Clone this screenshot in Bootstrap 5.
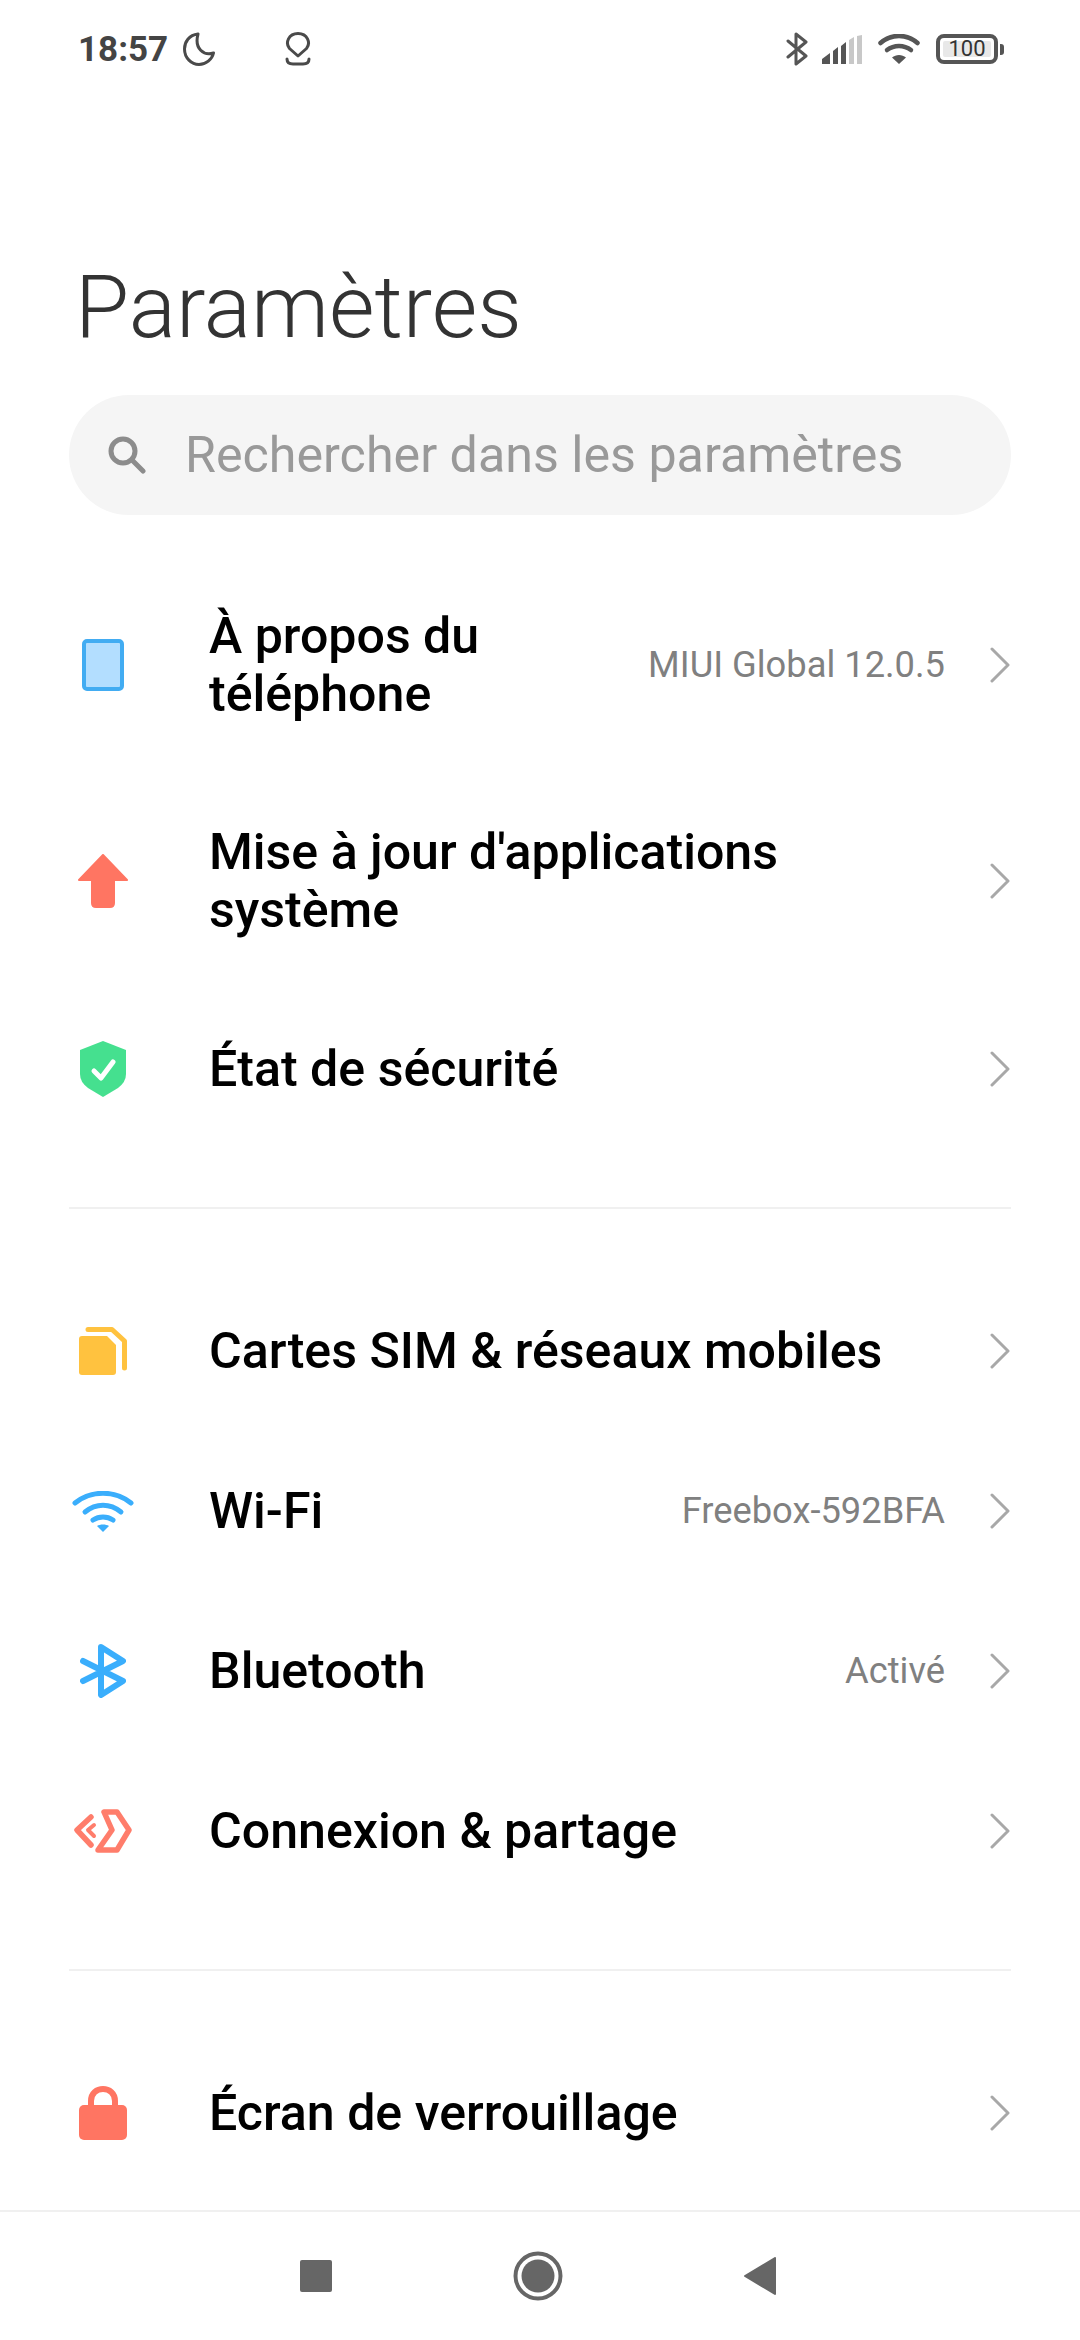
<!DOCTYPE html>
<html lang="fr">
<head>
    <meta charset="UTF-8">
    <meta name="viewport" content="width=device-width, initial-scale=1">
    <title>Paramètres</title>
    <link href="https://cdn.jsdelivr.net/npm/bootstrap@5.3.0/dist/css/bootstrap.min.css" rel="stylesheet">
    <style>
        html, body { height: 2340px; overflow: hidden; }
        body { font-family: Roboto, "Liberation Sans", sans-serif; background: #fff; color: #000; }
        .screen { height: 2340px; }
        .status-bar { height: 98px; padding: 0 76px 0 78px; color: #444; }
        .status-time { font-size: 35px; font-weight: 700; line-height: 1; width: 105px; flex-shrink: 0; }
        .moon-ic { margin-right: 70px; }
        .bt-ic { margin-right: 14px; }
        .sig-ic { margin-right: 16px; }
        .wifi-ic { margin-right: 16px; }
        .batt-body { width: 62px; height: 30px; border: 4px solid #555; border-radius: 8px; padding: 3px; }
        .batt-level { background: #e8e8e8; border-radius: 2px; font-size: 22px; line-height: 16px; color: #333; height: 16px; text-align: center; }
        .batt-nub { width: 4px; height: 11px; background: #555; border-radius: 0 3px 3px 0; margin-left: 2px; }
        .page-title { font-size: 88px; font-weight: 300; color: #333; line-height: 100px; margin: 159px 0 0 75px; }
        .search-box { height: 120px; margin: 38px 69px 0; background: #f5f5f5; border-radius: 60px; padding-left: 39px; color: #8c8c8c; }
        .search-text { font-size: 50.200px; margin-left: 39px; color: #999; line-height: 1; }
        .settings-list { padding: 0 69px; margin-top: 42px; }
        .set-row { height: 160px; }
        .set-row.two-line { height: 216px; }
        .set-icon { width: 68px; flex-shrink: 0; margin-right: 72px; }
        .set-name { font-size: 50.100px; font-weight: 500; line-height: 58px; }
        .set-value { font-size: 36.300px; color: #808080; margin-left: auto; margin-right: 44px; white-space: nowrap; }
        .chev { margin-left: auto; flex-shrink: 0; }
        .set-value + .chev { margin-left: 0; }
        .set-sep { border-top: 2px solid #f0f0f0; margin: 58px 0 62px; }
        .bottom-nav { height: 130px; margin-top: auto; border-top: 2px solid #f0f0f0; background: #fff; padding: 0 304px 0 300px; }
    </style>
</head>
<body>
<div class="screen d-flex flex-column">
    <!-- barre d'etat -->
    <div class="status-bar d-flex align-items-center">
        <span class="status-time">18:57</span>
        <svg class="moon-ic" width="32" height="34" viewBox="0 0 32 34" fill="none" stroke="#4a4a4a" stroke-width="3" stroke-linejoin="round"><path d="M15 2 C6 3 1.500 10 1.500 17 C1.500 26 8.500 32.500 16 32.500 C23 32.500 29 27.500 30.500 21 C21 24 11 17 15 2 Z"/></svg>
        <svg width="26" height="34" viewBox="0 0 26 34" fill="none" stroke="#4a4a4a" stroke-width="3" stroke-linejoin="round" stroke-linecap="round"><path d="M13 24 L4.500 16.500 C0 11 3.500 1.500 13 1.500 C22.500 1.500 26 11 21.500 16.500 Z"/><path d="M2 27 C2 31 5 32 8 32 L18 32 C21 32 24 31 24 27"/></svg>
        <div class="ms-auto d-flex align-items-center">
            <svg class="bt-ic" width="22" height="34" viewBox="0 0 22 34" fill="none" stroke="#555" stroke-width="3" stroke-linejoin="round" stroke-linecap="round"><path d="M2 9 L20 24 L10 32 L10 2 L20 10 L2 25"/></svg>
            <svg class="sig-ic" width="40" height="29" viewBox="0 0 40 29"><path fill="#555" d="M0 29 L0 24 L8 18 L8 29 Z M11 29 L11 16 L16 12 L16 29 Z M19 29 L19 11 L24 7 L24 29 Z"/><path fill="#c8c8c8" d="M27 29 L27 5 L32 2 L32 29 Z M35 29 L35 1 L40 0 L40 29 Z"/></svg>
            <svg class="wifi-ic" width="42" height="30" viewBox="0 0 42 30" fill="none" stroke="#555" stroke-width="4.500" stroke-linecap="round"><path d="M2.500 9 C13 -0.500 29 -0.500 39.500 9"/><path d="M9 16 C16 10.500 26 10.500 33 16"/><path fill="#555" stroke="none" d="M21 30 L14 23.500 C18 20 24 20 28 23.500 Z"/></svg>
            <div class="batt-body"><div class="batt-level">100</div></div>
            <div class="batt-nub"></div>
        </div>
    </div>

    <h1 class="page-title">Paramètres</h1>

    <div class="search-box d-flex align-items-center">
        <svg width="38" height="38" viewBox="0 0 38 38" fill="none" stroke="#8c8c8c" stroke-width="5" stroke-linecap="round"><circle cx="15" cy="15" r="12"/><path d="M24 24 L35 35"/></svg>
        <span class="search-text">Rechercher dans les paramètres</span>
    </div>

    <div class="settings-list">
        <div class="set-row two-line d-flex align-items-center">
            <div class="set-icon d-flex justify-content-center">
                <svg width="42" height="52" viewBox="0 0 42 52"><rect x="2" y="2" width="38" height="48" rx="3" fill="#b3deff" stroke="#42acf2" stroke-width="4"/></svg>
            </div>
            <div class="set-name">À propos du<br>téléphone</div>
            <div class="set-value">MIUI Global 12.0.5</div>
            <svg class="chev" width="22" height="36" viewBox="0 0 22 36" fill="none" stroke="#a8a8a8" stroke-width="3" stroke-linecap="round" stroke-linejoin="round"><path d="M3 2 L19 18 L3 34"/></svg>
        </div>
        <div class="set-row two-line d-flex align-items-center">
            <div class="set-icon d-flex justify-content-center">
                <svg width="50" height="54" viewBox="0 0 50 54"><path fill="#ff7562" stroke="#ff7562" stroke-width="2" stroke-linejoin="round" d="M25 1 L49 26 L36 26 L36 49 Q36 53 32 53 L18 53 Q14 53 14 49 L14 26 L1 26 Z"/></svg>
            </div>
            <div class="set-name">Mise à jour d'applications<br>système</div>
            <svg class="chev" width="22" height="36" viewBox="0 0 22 36" fill="none" stroke="#a8a8a8" stroke-width="3" stroke-linecap="round" stroke-linejoin="round"><path d="M3 2 L19 18 L3 34"/></svg>
        </div>
        <div class="set-row d-flex align-items-center">
            <div class="set-icon d-flex justify-content-center">
                <svg width="46" height="56" viewBox="0 0 46 56"><path fill="#45e08f" d="M23 0 L46 9 L46 33 Q46 41 38 47 L23 56 L8 47 Q0 41 0 33 L0 9 Z"/><path fill="none" stroke="#fff" stroke-width="5" stroke-linecap="round" stroke-linejoin="round" d="M14 30 L21 37 L33 21"/></svg>
            </div>
            <div class="set-name">État de sécurité</div>
            <svg class="chev" width="22" height="36" viewBox="0 0 22 36" fill="none" stroke="#a8a8a8" stroke-width="3" stroke-linecap="round" stroke-linejoin="round"><path d="M3 2 L19 18 L3 34"/></svg>
        </div>

        <div class="set-sep"></div>

        <div class="set-row d-flex align-items-center">
            <div class="set-icon d-flex justify-content-center">
                <svg width="48" height="48" viewBox="0 0 48 48"><path fill="#ffc23f" d="M3 9 L28 9 L37 18 L37 45 Q37 48 34 48 L3 48 Q0 48 0 45 L0 12 Q0 9 3 9 Z"/><path fill="none" stroke="#ffc23f" stroke-width="5" stroke-linecap="round" stroke-linejoin="round" d="M9 2.500 L33 2.500 L45.500 14 L45.500 41"/></svg>
            </div>
            <div class="set-name">Cartes SIM &amp; réseaux mobiles</div>
            <svg class="chev" width="22" height="36" viewBox="0 0 22 36" fill="none" stroke="#a8a8a8" stroke-width="3" stroke-linecap="round" stroke-linejoin="round"><path d="M3 2 L19 18 L3 34"/></svg>
        </div>
        <div class="set-row d-flex align-items-center">
            <div class="set-icon d-flex justify-content-center">
                <svg width="62" height="41" viewBox="0 0 62 41" fill="none" stroke="#3aaefc" stroke-width="5" stroke-linecap="round"><path d="M3 12 C19 -1 43 -1 59 12"/><path d="M13 21 C24 12 38 12 49 21"/><path d="M21 29 C27 25 35 25 41 29"/><path fill="#3aaefc" stroke="none" d="M31 41 L25 35 C28 33 34 33 37 35 Z"/></svg>
            </div>
            <div class="set-name">Wi-Fi</div>
            <div class="set-value">Freebox-592BFA</div>
            <svg class="chev" width="22" height="36" viewBox="0 0 22 36" fill="none" stroke="#a8a8a8" stroke-width="3" stroke-linecap="round" stroke-linejoin="round"><path d="M3 2 L19 18 L3 34"/></svg>
        </div>
        <div class="set-row d-flex align-items-center">
            <div class="set-icon d-flex justify-content-center">
                <svg width="46" height="54" viewBox="0 0 46 54" fill="none" stroke="#3aaefc" stroke-width="6" stroke-linecap="round" stroke-linejoin="round"><path d="M3 17 L43 37 L21 51 L21 3 L43 17 L3 37"/></svg>
            </div>
            <div class="set-name">Bluetooth</div>
            <div class="set-value">Activé</div>
            <svg class="chev" width="22" height="36" viewBox="0 0 22 36" fill="none" stroke="#a8a8a8" stroke-width="3" stroke-linecap="round" stroke-linejoin="round"><path d="M3 2 L19 18 L3 34"/></svg>
        </div>
        <div class="set-row d-flex align-items-center">
            <div class="set-icon d-flex justify-content-center">
                <svg width="58" height="44" viewBox="0 0 58 44" fill="none" stroke="#ff7d6b" stroke-width="5.500" stroke-linejoin="round" stroke-linecap="round"><path d="M30 3 L43 3 L55 21 L43 41 L24 41 L38 21 Z"/><path d="M17 8 L3 21 L17 36"/><path stroke-width="4" d="M20 16 L14 21 L20 27"/></svg>
            </div>
            <div class="set-name">Connexion &amp; partage</div>
            <svg class="chev" width="22" height="36" viewBox="0 0 22 36" fill="none" stroke="#a8a8a8" stroke-width="3" stroke-linecap="round" stroke-linejoin="round"><path d="M3 2 L19 18 L3 34"/></svg>
        </div>

        <div class="set-sep"></div>

        <div class="set-row d-flex align-items-center">
            <div class="set-icon d-flex justify-content-center">
                <svg width="48" height="54" viewBox="0 0 48 54"><path fill="none" stroke="#ff7562" stroke-width="6" d="M12 24 L12 15 C12 -1 36 -1 36 15 L36 24"/><rect x="0" y="19" width="48" height="35" rx="5" fill="#ff7562"/></svg>
            </div>
            <div class="set-name">Écran de verrouillage</div>
            <svg class="chev" width="22" height="36" viewBox="0 0 22 36" fill="none" stroke="#a8a8a8" stroke-width="3" stroke-linecap="round" stroke-linejoin="round"><path d="M3 2 L19 18 L3 34"/></svg>
        </div>
    </div>

    <!-- navigation -->
    <div class="bottom-nav d-flex align-items-center justify-content-between">
        <svg width="32" height="32" viewBox="0 0 32 32"><rect width="32" height="32" rx="2" fill="#666"/></svg>
        <svg width="50" height="50" viewBox="0 0 50 50"><circle cx="25" cy="25" r="22.500" fill="none" stroke="#666" stroke-width="4"/><circle cx="25" cy="25" r="16.500" fill="#666"/></svg>
        <svg width="32" height="38" viewBox="0 0 32 38"><path fill="#666" stroke="#666" stroke-width="2" stroke-linejoin="round" d="M1 19 L31 1 L31 37 Z"/></svg>
    </div>
</div>
<script src="https://cdn.jsdelivr.net/npm/bootstrap@5.3.0/dist/js/bootstrap.bundle.min.js"></script>
</body>
</html>
